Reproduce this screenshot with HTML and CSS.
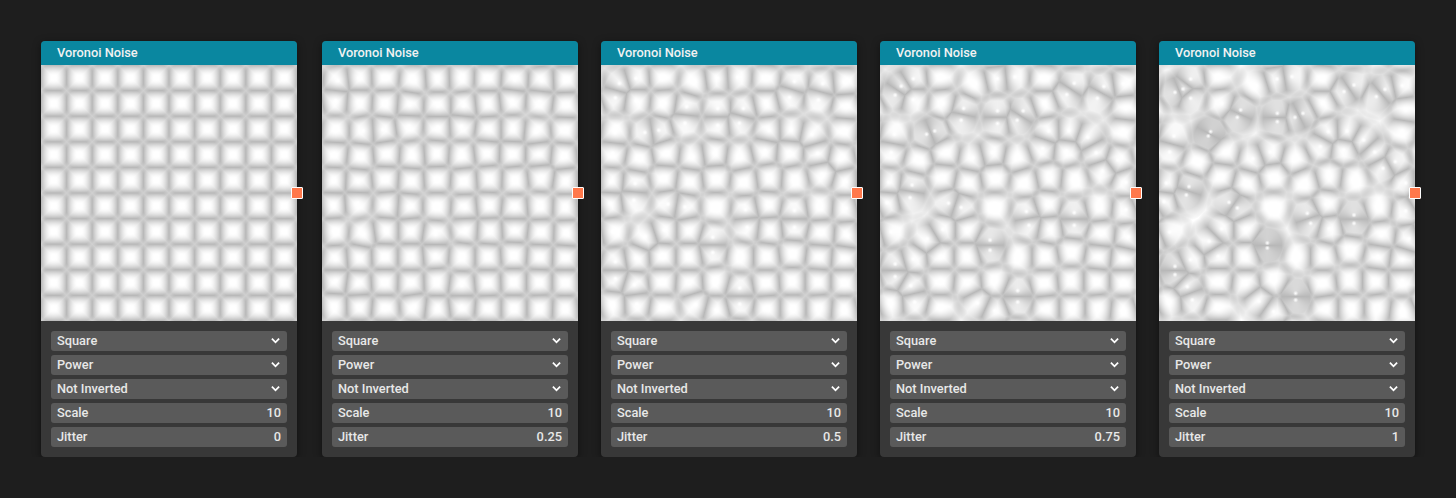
FILE: index.html
```html
<!DOCTYPE html>
<html lang="en">
<head>
    <meta charset="UTF-8">
    <title>Voronoi Noise</title>
    <link rel="stylesheet" href="styles.css">
</head>
<body>

    <div class="node-row">
        <div class="node" data-jitter="0" data-label="0"></div>
        <div class="node" data-jitter="0.25" data-label="0.25"></div>
        <div class="node" data-jitter="0.5" data-label="0.5"></div>
        <div class="node" data-jitter="0.75" data-label="0.75"></div>
        <div class="node" data-jitter="1" data-label="1"></div>
    </div>

    <template id="node-template">
        <div class="node-title">Voronoi Noise</div>
        <div class="node-preview">
            <canvas class="noise" width="256" height="256"></canvas>
            <span class="port"></span>
        </div>
        <div class="node-controls">
            <div class="control"><span>Square</span><svg class="chevron" viewBox="0 0 10 10"><polyline points="1,3 5,7 9,3"/></svg></div>
            <div class="control"><span>Power</span><svg class="chevron" viewBox="0 0 10 10"><polyline points="1,3 5,7 9,3"/></svg></div>
            <div class="control"><span>Not Inverted</span><svg class="chevron" viewBox="0 0 10 10"><polyline points="1,3 5,7 9,3"/></svg></div>
            <div class="control"><span>Scale</span><span>10</span></div>
            <div class="control"><span>Jitter</span><span class="jitter-value"></span></div>
        </div>
    </template>

    <script src="app.js"></script>
</body>
</html>
```

FILE: styles.css
```css
body {
    margin: 0;
    background-color: #1e1e1e;
    font-family: 'Roboto', 'Liberation Sans', sans-serif;
    font-size: 12.8px;
    font-weight: 500;
    color: #e8e8e8;
}

.node-row {
    display: flex;
    gap: 23px;
    padding: 41px 0 0 41px;
}

.node {
    width: 256px;
    border-radius: 4px;
    background-color: #383838;
    box-shadow: 0 2px 8px rgba(0, 0, 0, 0.45);
}

.node:first-child {
    margin-right: 2px;
}

.node-title {
    height: 24px;
    line-height: 24px;
    padding-left: 16px;
    border-radius: 4px 4px 0 0;
    background-color: #0a87a0;
    color: #f2f2f2;
}

.node-preview {
    position: relative;
    height: 256px;
}

.noise {
    display: block;
}

.port {
    position: absolute;
    top: 122px;
    right: -6px;
    width: 10px;
    height: 10px;
    border: 1px solid #ffffff;
    border-radius: 1px;
    background-color: #ff784b;
}

.node-controls {
    display: flex;
    flex-direction: column;
    gap: 4px;
    padding: 10px;
}

.control {
    display: flex;
    justify-content: space-between;
    align-items: center;
    box-sizing: border-box;
    height: 20px;
    padding: 0 6px 1px;
    border-radius: 3px;
    background-color: #5a5a5a;
}

.chevron {
    width: 9px;
    height: 9px;
    margin-right: 1px;
    fill: none;
    stroke: #ffffff;
    stroke-width: 2;
}
```

FILE: app.js
```js
// feature points of the 10x10 grid at jitter 1, in 3x pixels, one per cell
var points = [
    [[72,72],[95,42],[178,32],[291,62],[354,42],[399,35],[491,42],[585,60],[678,73],[730,62]],
    [[48,82],[95,100],[188,115],[245,135],[355,145],[432,145],[491,115],[555,80],[652,95],[740,135]],
    [[45,213],[148,213],[155,200],[235,157],[355,170],[408,157],[508,200],[564,198],[614,225],[730,198]],
    [[32,261],[115,291],[198,261],[281,281],[334,261],[408,281],[484,245],[554,255],[647,261],[709,290]],
    [[22,354],[90,365],[188,334],[261,354],[344,334],[438,354],[511,334],[584,344],[672,310],[740,354]],
    [[15,410],[82,390],[210,412],[235,429],[344,428],[445,445],[501,418],[585,450],[657,428],[740,438]],
    [[32,501],[150,529],[188,491],[261,491],[325,534],[455,475],[511,491],[585,475],[667,511],[750,521]],
    [[48,604],[95,584],[178,574],[261,574],[325,549],[418,574],[491,574],[574,554],[657,574],[730,584]],
    [[48,629],[85,665],[178,647],[261,657],[344,647],[410,685],[491,657],[574,647],[647,647],[730,647]],
    [[32,710],[100,705],[178,730],[300,709],[344,740],[410,705],[501,730],[574,730],[657,730],[730,740]]
];

function drawNoise(canvas, jitter) {
    var ctx = canvas.getContext("2d");
    var image = ctx.createImageData(256, 256);
    var cell = 25.6;
    var list = [];

    // wrap the points one cell around so the edges have neighbours
    for (var row = -1; row <= 10; row++) {
        for (var col = -1; col <= 10; col++) {
            var p = points[(row + 10) % 10][(col + 10) % 10];
            var cx = (col + 10) % 10 * cell + cell / 2;
            var cy = (row + 10) % 10 * cell + cell / 2;
            list.push([
                cx + jitter * (p[0] / 3 - cx) + (col - (col + 10) % 10) * cell,
                cy + jitter * (p[1] / 3 - cy) + (row - (row + 10) % 10) * cell
            ]);
        }
    }

    for (var y = 0; y < 256; y++) {
        for (var x = 0; x < 256; x++) {
            var f1 = 1e9, f2 = 1e9;
            for (var i = 0; i < list.length; i++) {
                var dx = list[i][0] - x - 0.5, dy = list[i][1] - y - 0.5;
                var d = Math.sqrt(dx * dx + dy * dy) / cell;
                if (d < f1) { f2 = f1; f1 = d; }
                else if (d < f2) { f2 = d; }
            }
            var dark = 0.28 * Math.pow(Math.max(0, 1 - (f2 - f1) * 1.2), 1.7);
            // white at the points themselves, and again far away from any point
            var spot = Math.min(1, f1 / 0.1);
            var fade = Math.min(1, Math.max(0, (1.0 - f1) / 0.45));
            var shade = 1 - dark * spot * fade;
            var at = (y * 256 + x) * 4;
            image.data[at] = image.data[at + 1] = image.data[at + 2] = shade * 255;
            image.data[at + 3] = 255;
        }
    }
    ctx.putImageData(image, 0, 0);
}

var template = document.getElementById("node-template");
document.querySelectorAll(".node").forEach(function (node) {
    node.appendChild(template.content.cloneNode(true));
    node.querySelector(".jitter-value").innerText = node.dataset.label;
    drawNoise(node.querySelector(".noise"), parseFloat(node.dataset.jitter));
});
```
